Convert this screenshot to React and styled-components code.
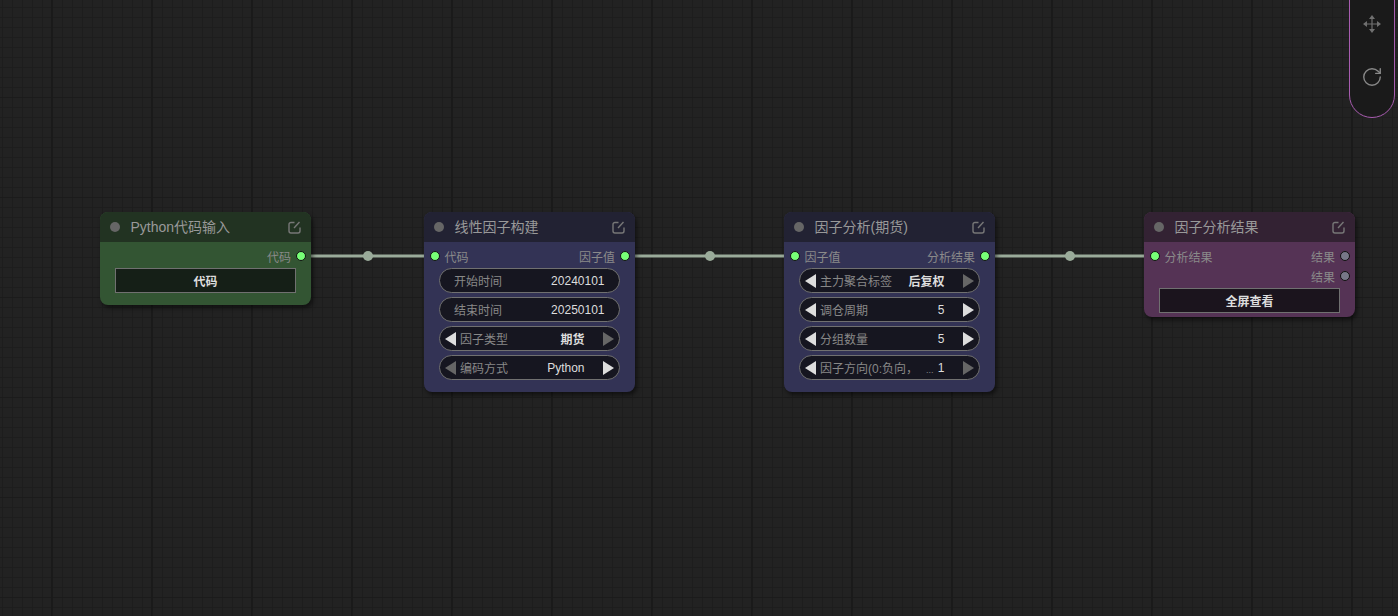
import React from 'react';
import styled, { createGlobalStyle } from 'styled-components';
import { RotateCw } from 'lucide-react';

const GlobalStyle = createGlobalStyle`
  html, body {
    margin: 0;
    height: 100%;
    overflow: hidden;
    background: #222;
  }
  #root {
    height: 100%;
  }
`;

const FONT = '"Liberation Sans", "Noto Sans CJK SC", sans-serif';

const THEMES = {
  green: { head: '#223322', body: '#335533', button: '#151f17' },
  blue: { head: '#222233', body: '#333355', button: '#161620' },
  purple: { head: '#332233', body: '#553355', button: '#1b141d' },
};

const Canvas = styled.main`
  position: relative;
  width: 1398px;
  height: 616px;
  overflow: hidden;
  font-family: ${FONT};
  background-color: #222;
  background-image:
    linear-gradient(to right, #1a1a1a 2px, transparent 2px),
    linear-gradient(to bottom, #1b1b1b 1px, transparent 1px),
    linear-gradient(to right, #1d1d1d 1px, transparent 1px),
    linear-gradient(to bottom, #1d1d1d 1px, transparent 1px);
  background-size: 100px 100px, 100px 100px, 10px 10px, 10px 10px;
  background-position: 51px 0, 0 97px, 2px 0, 0 7px;
`;

const Links = styled.svg`
  position: absolute;
  inset: 0;
`;

const Node = styled.section`
  position: absolute;
  left: ${({ $x }) => $x}px;
  top: 212px;
  width: 210.5px;
  border-radius: 8px;
  overflow: hidden;
  background: ${({ $tone }) => THEMES[$tone].body};
  box-shadow: 2px 3px 4px rgba(0, 0, 0, 0.5);
`;

const NodeBody = styled.div`
  display: flex;
  flex-direction: column;
  padding: 4px 0 ${({ $bottom }) => $bottom}px;
`;

const Title = styled.header`
  display: flex;
  align-items: center;
  height: 30px;
  padding: 0 10px;
  box-sizing: border-box;
  background: ${({ $tone }) => THEMES[$tone].head};
  color: #999;
`;

const TitleDot = styled.span`
  width: 10px;
  height: 10px;
  border-radius: 50%;
  background: #666;
  margin-right: 10.5px;
`;

const TitleText = styled.h2`
  flex: 1;
  margin: 0;
  font-size: 14px;
  font-weight: 400;
  line-height: 30px;
`;

const EditSvg = styled.svg`
  width: 13px;
  height: 13px;
  fill: none;
  stroke: #777;
  stroke-width: 1.4;
`;

const SlotRow = styled.div`
  display: flex;
  align-items: center;
  justify-content: ${({ $split }) => ($split ? 'space-between' : 'flex-end')};
  height: 20px;
  padding: 0 4.5px 0 5.5px;
`;

const SlotSide = styled.div`
  display: flex;
  align-items: center;
  gap: 5px;
  color: #8a8a8a;
  font-size: 12px;
`;

const SlotDot = styled.span`
  width: 8px;
  height: 8px;
  border-radius: 50%;
  border: 1px solid #111;
  background: ${({ $on }) => ($on ? '#77ff77' : '#778')};
`;

const Widgets = styled.div`
  display: flex;
  flex-direction: column;
  gap: 4px;
  margin-top: 2px;
  padding: 0 15px;
`;

const Pill = styled.div`
  display: flex;
  align-items: center;
  height: 25px;
  box-sizing: border-box;
  padding: ${({ $combo }) => ($combo ? '0 5px' : '0 14px')};
  border: 1px solid #707070;
  border-radius: 13px;
  background: #161620;
  font-size: 12px;
`;

const PillLabel = styled.span`
  flex: 1;
  color: #888;
  white-space: nowrap;
  overflow: hidden;
  margin-left: ${({ $combo }) => ($combo ? '4px' : 0)};
`;

const PillValue = styled.span`
  color: #ddd;
  margin-right: ${({ $combo }) => ($combo ? '18px' : 0)};
  font-weight: ${({ $bold }) => ($bold ? 700 : 400)};
`;

const Dots = styled.span`
  font-size: 9px;
  margin-left: 8px;
`;

const Arrow = styled.span`
  flex: none;
  width: 0;
  height: 0;
  border-top: 7px solid transparent;
  border-bottom: 7px solid transparent;
  border-left: ${({ $dir, $off }) => ($dir === 'right' ? `11px solid ${$off ? '#666' : '#ddd'}` : 'none')};
  border-right: ${({ $dir, $off }) => ($dir === 'left' ? `11px solid ${$off ? '#666' : '#ddd'}` : 'none')};
`;

const ActionButton = styled.button`
  display: block;
  width: 181px;
  height: 25px;
  margin: 2px 0 0 15px;
  padding: 0;
  border: 1px solid #707070;
  background: ${({ $tone }) => THEMES[$tone].button};
  color: #ddd;
  font-family: ${FONT};
  font-size: 12px;
  font-weight: 700;
`;

const ToolPanel = styled.aside`
  position: absolute;
  top: -40px;
  right: 3px;
  width: 46px;
  height: 158px;
  box-sizing: border-box;
  border: 1px solid #a85cb0;
  border-radius: 23px;
  background: #1a1a1a;
  display: flex;
  flex-direction: column;
  align-items: center;
  padding-top: 54px;
  gap: 33px;
  color: #888;
`;

const MoveSvg = styled.svg`
  width: 18px;
  height: 18px;
  color: #707070;
`;

function EditIcon() {
  return (
    <EditSvg viewBox="0 0 13 13">
      <path d="M6.5 1.5H3a2 2 0 0 0-2 2v6.500a2 2 0 0 0 2 2h7a2 2 0 0 0 2-2V6.500" />
      <path d="M6 7l5.500-6" />
    </EditSvg>
  );
}

function MoveIcon() {
  return (
    <MoveSvg viewBox="0 0 18 18">
      <path d="M9 3v12M3 9h12" stroke="currentColor" strokeWidth="1.2" />
      <path d="M9 0l3 4H6zM9 18l-3-4h6zM0 9l4-3v6zM18 9l-4 3V6z" fill="currentColor" />
    </MoveSvg>
  );
}

function InputRow({ label, value }) {
  return (
    <Pill>
      <PillLabel>{label}</PillLabel>
      <PillValue>{value}</PillValue>
    </Pill>
  );
}

function ComboRow({ label, value, leftOff, rightOff, bold, dots }) {
  return (
    <Pill $combo>
      <Arrow $dir="left" $off={leftOff} />
      <PillLabel $combo>
        {label}
        {dots && <Dots>...</Dots>}
      </PillLabel>
      <PillValue $combo $bold={bold}>{value}</PillValue>
      <Arrow $dir="right" $off={rightOff} />
    </Pill>
  );
}

function Slots({ left, right }) {
  return (
    <SlotRow $split={!!left}>
      {left && (
        <SlotSide>
          <SlotDot $on />
          {left}
        </SlotSide>
      )}
      {right && (
        <SlotSide>
          {right.label}
          <SlotDot $on={right.on} />
        </SlotSide>
      )}
    </SlotRow>
  );
}

function GraphNode({ x, tone, title, bottom, children }) {
  return (
    <Node $x={x} $tone={tone}>
      <Title $tone={tone}>
        <TitleDot />
        <TitleText>{title}</TitleText>
        <EditIcon />
      </Title>
      <NodeBody $bottom={bottom}>{children}</NodeBody>
    </Node>
  );
}

function App() {
  const spans = [
    [310, 425, 368],
    [634, 785, 710],
    [994, 1145, 1070],
  ];

  return (
    <Canvas>
      <GlobalStyle />
      <Links width="1398" height="616">
        {spans.map(([from, to, mid]) => (
          <g key={from}>
            <line x1={from} y1="256" x2={to} y2="256" stroke="#9aab9a" strokeWidth="3" />
            <circle cx={mid} cy="256" r="5" fill="#9aab9a" />
          </g>
        ))}
      </Links>

      <GraphNode x={100} tone="green" title="Python代码输入" bottom={12}>
        <Slots right={{ label: '代码', on: true }} />
        <ActionButton $tone="green">代码</ActionButton>
      </GraphNode>

      <GraphNode x={424} tone="blue" title="线性因子构建" bottom={12}>
        <Slots left="代码" right={{ label: '因子值', on: true }} />
        <Widgets>
          <InputRow label="开始时间" value="20240101" />
          <InputRow label="结束时间" value="20250101" />
          <ComboRow label="因子类型" value="期货" rightOff bold />
          <ComboRow label="编码方式" value="Python" leftOff />
        </Widgets>
      </GraphNode>

      <GraphNode x={784} tone="blue" title="因子分析(期货)" bottom={12}>
        <Slots left="因子值" right={{ label: '分析结果', on: true }} />
        <Widgets>
          <ComboRow label="主力聚合标签" value="后复权" rightOff bold />
          <ComboRow label="调仓周期" value="5" />
          <ComboRow label="分组数量" value="5" />
          <ComboRow label="因子方向(0:负向，" value="1" rightOff dots />
        </Widgets>
      </GraphNode>

      <GraphNode x={1144} tone="purple" title="因子分析结果" bottom={4}>
        <Slots left="分析结果" right={{ label: '结果' }} />
        <Slots right={{ label: '结果' }} />
        <ActionButton $tone="purple">全屏查看</ActionButton>
      </GraphNode>

      <ToolPanel>
        <MoveIcon />
        <RotateCw size={22} strokeWidth={1.5} />
      </ToolPanel>
    </Canvas>
  );
}

export default App;
